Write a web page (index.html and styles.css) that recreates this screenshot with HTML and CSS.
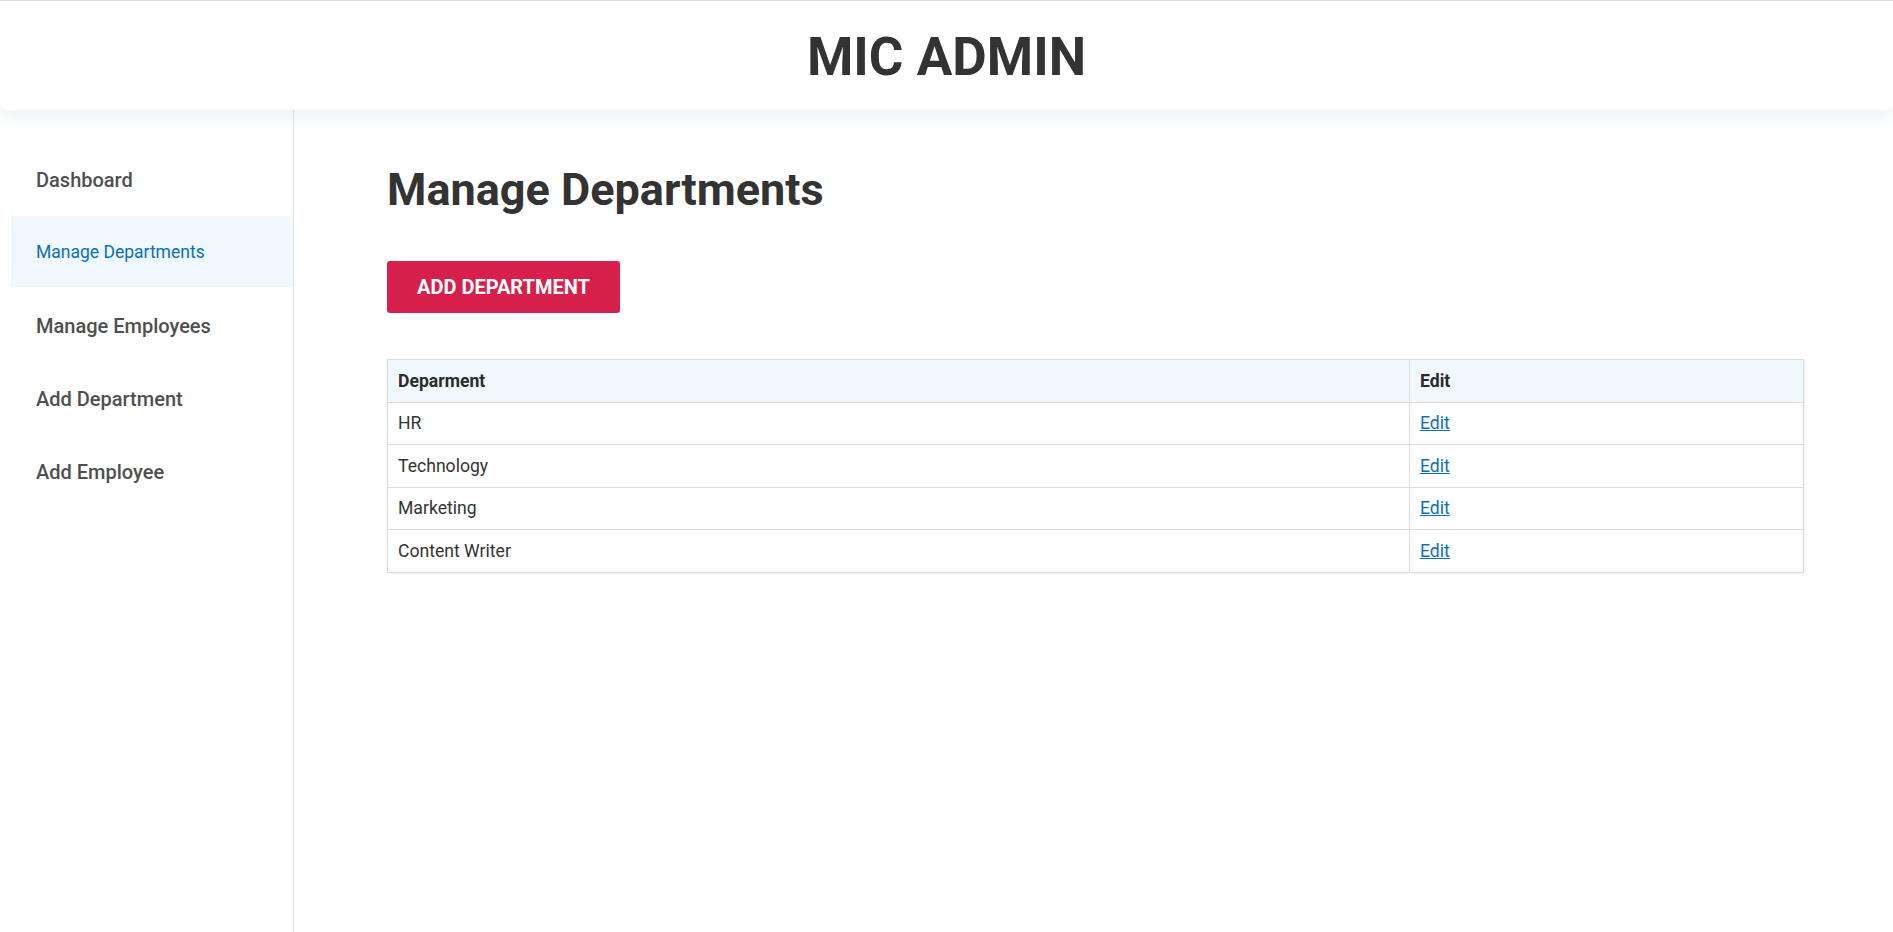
FILE: index.html
```html
<!DOCTYPE html>
<html lang="en">
<head>
<meta charset="utf-8">
<title>MIC Admin</title>
<link rel="stylesheet" href="styles.css">
</head>
<body>
<header class="topbar">
  <h1 class="brand">MIC ADMIN</h1>
</header>
<div class="layout">
  <nav class="sidebar">
    <a class="nav-item" href="#">Dashboard</a>
    <a class="nav-item active" href="#">Manage Departments</a>
    <a class="nav-item" href="#">Manage Employees</a>
    <a class="nav-item" href="#">Add Department</a>
    <a class="nav-item" href="#">Add Employee</a>
  </nav>
  <main class="content">
    <h2 class="page-title">Manage Departments</h2>
    <button class="btn-add" type="button">ADD DEPARTMENT</button>
    <table class="dept-table">
      <thead>
        <tr><th class="col-name">Deparment</th><th>Edit</th></tr>
      </thead>
      <tbody>
        <tr><td>HR</td><td><a href="#">Edit</a></td></tr>
        <tr><td>Technology</td><td><a href="#">Edit</a></td></tr>
        <tr><td>Marketing</td><td><a href="#">Edit</a></td></tr>
        <tr><td>Content Writer</td><td><a href="#">Edit</a></td></tr>
      </tbody>
    </table>
  </main>
</div>
</body>
</html>
```
FILE: styles.css
```css
* { box-sizing: border-box; }
html, body { height: 100%; }
body {
  margin: 0;
  font-family: Roboto, "Liberation Sans", Arial, sans-serif;
  color: #333;
  background: #fff;
  border-top: 1px solid #dadada;
  display: flex;
  flex-direction: column;
  overflow: hidden;
}
.topbar {
  position: relative;
  z-index: 2;
  height: 109px;
  background: #fff;
  border-radius: 0 0 8px 8px;
  box-shadow: 0 6px 18px rgba(70, 140, 180, 0.12);
  display: flex;
  align-items: center;
  justify-content: center;
}
.brand {
  margin: 0;
  font-size: 53px;
  font-weight: 700;
  color: #333;
  letter-spacing: 0;
  padding-top: 2px;
}
.layout {
  flex: 1;
  display: flex;
  min-height: 0;
}
.sidebar {
  width: 294px;
  flex: none;
  border-right: 1px solid #e4e4e4;
  padding: 33px 0 0 11px;
  display: flex;
  flex-direction: column;
}
.nav-item {
  height: 73px;
  display: flex;
  align-items: center;
  padding-left: 25px;
  font-size: 20px;
  font-weight: 500;
  color: #4f4f4f;
  text-decoration: none;
}
.nav-item.active {
  height: 71px;
  margin-bottom: 2px;
  background: #eef8fd;
  color: #0b6fba;
  font-size: 17.5px;
  font-weight: 400;
}
.content {
  flex: 1;
  padding: 53px 89px 0 93px;
}
.page-title {
  margin: 0;
  font-size: 45px;
  font-weight: 700;
  color: #333;
}
.btn-add {
  margin-top: 45px;
  height: 52px;
  padding: 0 30px;
  border: none;
  border-radius: 3px;
  background: #d61f4a;
  color: #fff;
  font-family: Roboto, "Liberation Sans", Arial, sans-serif;
  font-size: 20px;
  font-weight: 700;
  cursor: pointer;
}
.dept-table {
  margin-top: 46px;
  width: 100%;
  border-collapse: collapse;
  box-shadow: 1px 1px 2px rgba(0, 0, 0, 0.06);
}
.dept-table th,
.dept-table td {
  border: 1px solid #dcdcdc;
  height: 42.5px;
  padding: 0 10px;
  text-align: left;
  font-size: 17.6px;
}
.dept-table th {
  background: #eef8fd;
  font-weight: 700;
  color: #2b2b2b;
}
.dept-table td { color: #333; }
.dept-table .col-name { width: 1022px; }
.dept-table a { color: #0b6fba; }
```
